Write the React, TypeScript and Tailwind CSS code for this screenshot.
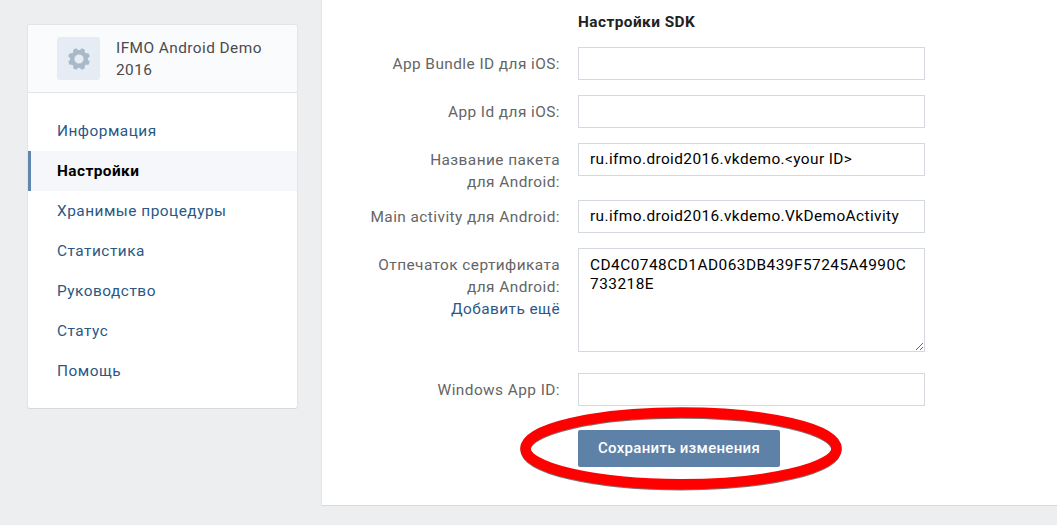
import type { ReactNode } from 'react';

const menu = [
  'Информация',
  'Настройки',
  'Хранимые процедуры',
  'Статистика',
  'Руководство',
  'Статус',
  'Помощь',
];
const ACTIVE = 'Настройки';

const field =
  'block w-[347px] shrink-0 rounded-none border border-[#d3d9de] bg-white pl-[11px] text-black outline-none';

const teeth = [22.5, 67.5, 112.5, 157.5, 202.5, 247.5, 292.5, 337.5];

function GearIcon() {
  return (
    <svg width="22" height="22" viewBox="-11 -11 22 22" fill="#a9b9c9">
      <path
        fillRule="evenodd"
        d="M0-9A9 9 0 1 0 0 9A9 9 0 1 0 0-9ZM0-4.6A4.6 4.6 0 1 1 0 4.6A4.6 4.6 0 1 1 0-4.6Z"
      />
      {teeth.map((a) => (
        <path key={a} d="M-2.8-7.5L-2-10.3Q-1.7-11-1-11L1-11Q1.7-11 2-10.3L2.8-7.5Z" transform={`rotate(${a})`} />
      ))}
    </svg>
  );
}

function Row({ label, className, children }: { label: ReactNode; className: string; children: ReactNode }) {
  return (
    <div className={`flex items-start ${className}`}>
      <div className="w-[238px] shrink-0 pt-[6px] text-right leading-[22px] text-[#656565]">{label}</div>
      <div className="ml-[18px]">{children}</div>
    </div>
  );
}

export default function App() {
  return (
    <div className="flex h-[525px] w-[1057px] items-start overflow-hidden bg-[#edeef0] font-['Roboto',sans-serif] text-[15.4px] tracking-[0.44px]">
      <aside className="mt-[25px] ml-[28px] h-[383px] w-[269px] shrink-0 overflow-hidden rounded-[2px] bg-white shadow-[0_1px_0_0_#d7d8db,0_0_0_1px_#e3e4e8]">
        <div className="flex h-[68px] items-start border-b border-[#e1e4ea] bg-[#fafbfd] pt-3 pl-[29px]">
          <div className="flex size-[43px] items-center justify-center rounded-[3px] bg-[#e5ecf4]">
            <GearIcon />
          </div>
          <div className="ml-4 w-[160px] leading-[22px] text-[#4b4b4b]">IFMO Android Demo 2016</div>
        </div>
        <nav className="pt-[18px]">
          {menu.map((item) => (
            <a
              key={item}
              className={
                item === ACTIVE
                  ? 'block h-10 border-l-[3px] border-[#6287ae] bg-[#f5f7fa] pl-[26px] leading-10 font-bold text-black'
                  : 'block h-10 pl-[29px] leading-10 tracking-[0.5px] text-[#2a5885]'
              }
            >
              {item}
            </a>
          ))}
        </nav>
      </aside>

      <main className="relative ml-[25px] h-[505px] w-[760px] shrink-0 bg-white shadow-[0_1px_0_0_#d7d8db,0_0_0_1px_#e3e4e8]">
        <h2 className="pt-[11px] pl-[256px] leading-[22px] font-bold text-[#222]">Настройки SDK</h2>
        <Row className="mt-[14px]" label="App Bundle ID для iOS:">
          <input className={`${field} h-[33px]`} />
        </Row>
        <Row className="mt-[15px]" label="App Id для iOS:">
          <input className={`${field} h-[33px]`} />
        </Row>
        <Row className="mt-[15px] h-[42px]" label={<>Название пакета<br />для Android:</>}>
          <input className={`${field} h-[33px] pr-[11px] pb-[2px] tracking-[0.4px]`} defaultValue="ru.ifmo.droid2016.vkdemo.<your ID>" />
        </Row>
        <Row className="mt-[15px] h-[33px]" label="Main activity для Android:">
          <input className={`${field} h-[33px] pr-[11px] pb-[2px] tracking-[0.4px]`} defaultValue="ru.ifmo.droid2016.vkdemo.VkDemoActivity" />
        </Row>
        <Row
          className="mt-[15px]"
          label={<>Отпечаток сертификата<br />для Android:<br /><a className="text-[#2a5885]">Добавить ещё</a></>}
        >
          <textarea
            className={`${field} h-[104px] resize overflow-hidden pt-[7px] pr-[14px] leading-[19px] tracking-[0.48px] break-all`}
            defaultValue="CD4C0748CD1AD063DB439F57245A4990C733218E"
          />
        </Row>
        <Row className="mt-[21px]" label="Windows App ID:">
          <input className={`${field} h-[33px]`} />
        </Row>
        <button className="mt-6 ml-[256px] block h-[37px] w-[202px] rounded-[2px] bg-[#5e81a8] pb-px text-center text-[15px] font-medium tracking-[0.3px] text-white">
          Сохранить изменения
        </button>
        <svg className="absolute top-[402px] left-[193px]" width="332" height="94" viewBox="515 402 332 94" fill="none" strokeWidth="10.5">
          <ellipse cx="681" cy="449.4" rx="155.5" ry="35.8" stroke="#777" />
          <ellipse cx="681" cy="448.4" rx="155.5" ry="35.8" stroke="#f00" />
        </svg>
      </main>
    </div>
  );
}
